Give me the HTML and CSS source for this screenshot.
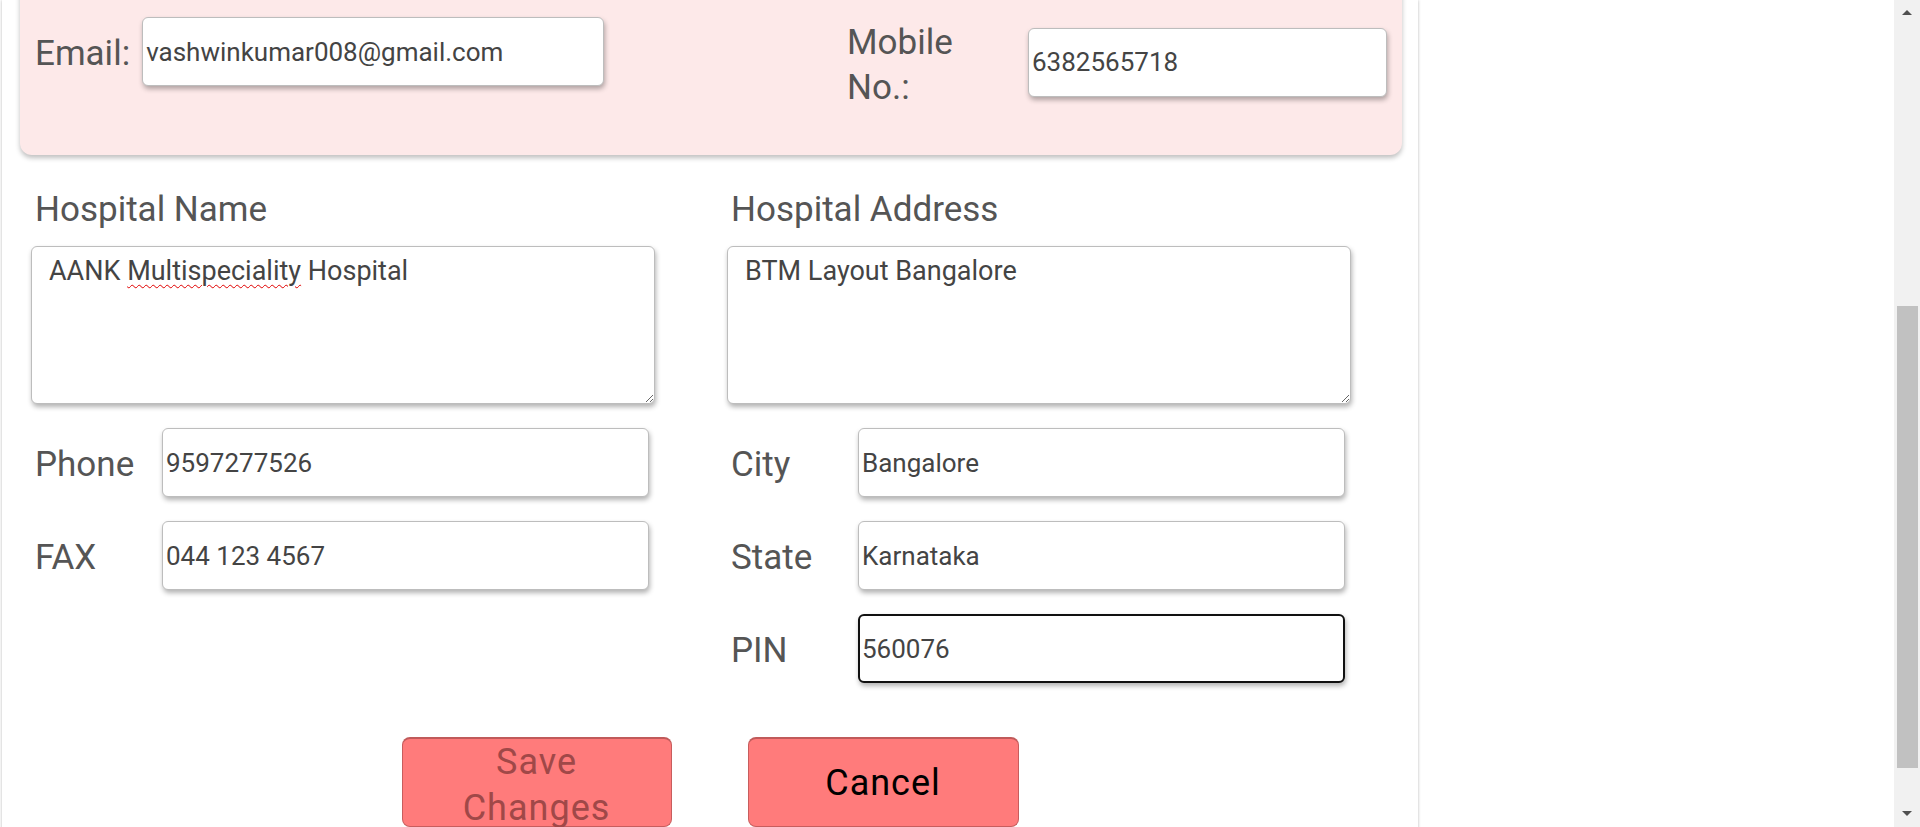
FILE: index.html
```html
<!DOCTYPE html>
<html lang="en">
<head>
<meta charset="utf-8">
<title>Edit Hospital Profile</title>
<link rel="stylesheet" href="styles.css">
</head>
<body>
<div class="viewport">
  <main class="sheet">
    <section class="contact-card">
      <div class="contact-group">
        <label class="card-label" for="email">Email:</label>
        <input class="field field-email" id="email" type="text" value="vashwinkumar008@gmail.com">
      </div>
      <div class="contact-group">
        <label class="card-label card-label-wrap" for="mobile">Mobile No.:</label>
        <input class="field field-mobile" id="mobile" type="text" value="6382565718">
      </div>
    </section>

    <form class="hospital-form">
      <div class="form-col">
        <label class="block-label" for="hname">Hospital Name</label>
        <div class="area-wrap">
          <textarea class="area" id="hname" spellcheck="false">AANK Multispeciality Hospital</textarea>
          <div class="area-mirror" aria-hidden="true">AANK <span class="misspelt">Multispeciality</span> Hospital</div>
        </div>
        <div class="field-rows">
          <div class="row">
            <label class="row-label" for="phone">Phone</label>
            <input class="field field-row" id="phone" type="text" value="9597277526">
          </div>
          <div class="row">
            <label class="row-label" for="fax">FAX</label>
            <input class="field field-row" id="fax" type="text" value="044 123 4567">
          </div>
        </div>
      </div>
      <div class="form-col">
        <label class="block-label" for="haddr">Hospital Address</label>
        <div class="area-wrap">
          <textarea class="area" id="haddr" spellcheck="false">BTM Layout Bangalore</textarea>
        </div>
        <div class="field-rows">
          <div class="row">
            <label class="row-label" for="city">City</label>
            <input class="field field-row" id="city" type="text" value="Bangalore">
          </div>
          <div class="row">
            <label class="row-label" for="state">State</label>
            <input class="field field-row" id="state" type="text" value="Karnataka">
          </div>
          <div class="row">
            <label class="row-label" for="pin">PIN</label>
            <input class="field field-row field-focus" id="pin" type="text" value="560076">
          </div>
        </div>
      </div>
    </form>

    <div class="actions">
      <button class="btn btn-save" type="button" disabled>Save Changes</button>
      <button class="btn btn-cancel" type="button">Cancel</button>
    </div>
  </main>

  <div class="scrollbar" aria-hidden="true">
    <div class="sb-arrow sb-up"></div>
    <div class="sb-track">
      <div class="sb-thumb"></div>
    </div>
    <div class="sb-arrow sb-down"></div>
  </div>
</div>
</body>
</html>
```

FILE: styles.css
```css
* {
  box-sizing: border-box;
}

html,
body {
  margin: 0;
  height: 100%;
  overflow: hidden;
  background: #ffffff;
}

body {
  font-family: Roboto, "Open Sans", "Liberation Sans", sans-serif;
  color: #555555;
}

.viewport {
  display: flex;
  height: 827px;
}

.sheet {
  flex: 0 0 1416px;
  margin-left: 2px;
  background: #ffffff;
  box-shadow: 0 0 3px rgba(0, 0, 0, 0.28);
  min-height: 900px;
}

/* ---------- contact card ---------- */
.contact-card {
  margin: -20px 16px 0 18px;
  padding: 37px 15px 48px 15px;
  background: #fde9e9;
  border-radius: 12px;
  box-shadow: 0 3px 5px rgba(0, 0, 0, 0.25);
  display: flex;
  justify-content: space-between;
  align-items: flex-start;
}

.contact-group {
  display: flex;
  align-items: center;
}

.card-label {
  font-size: 35px;
  line-height: 45px;
  color: #555555;
  padding-top: 4px;
}

.card-label-wrap {
  width: 165px;
  margin-right: 16px;
  padding-top: 3px;
  margin-bottom: -3px;
}

.field {
  height: 69px;
  border: 1px solid #bdbdbd;
  border-radius: 6px;
  background: #ffffff;
  box-shadow: 1px 3px 5px rgba(0, 0, 0, 0.3);
  padding: 0 3px;
  font-family: Roboto, "Open Sans", sans-serif;
  font-size: 26px;
  color: #444444;
  outline: none;
}

.field-email {
  width: 462px;
  margin-left: 12px;
}

.field-mobile {
  width: 359px;
}

/* ---------- form grid ---------- */
.hospital-form {
  display: grid;
  grid-template-columns: 624px 624px;
  column-gap: 72px;
  padding-left: 29px;
  margin-top: 34px;
}

.form-col {
  display: flex;
  flex-direction: column;
}

.block-label {
  font-size: 35px;
  line-height: 42px;
  padding-left: 4px;
  margin-bottom: 15px;
}

.area-wrap {
  position: relative;
  height: 158px;
}

.area,
.area-mirror {
  width: 624px;
  height: 158px;
  padding: 6px 17px;
  font-family: Roboto, "Open Sans", sans-serif;
  font-size: 27px;
  line-height: 36px;
  border: 1px solid #bdbdbd;
  border-radius: 6px;
}

.area {
  display: block;
  margin: 0;
  background: #ffffff;
  color: #444444;
  box-shadow: 1px 3px 5px rgba(0, 0, 0, 0.3);
  outline: none;
  resize: both;
}

.area-mirror {
  position: absolute;
  left: 0;
  top: 0;
  color: transparent;
  border-color: transparent;
  pointer-events: none;
}

.misspelt {
  text-decoration: underline wavy #e00000;
  text-decoration-thickness: 1px;
  text-underline-offset: 4px;
}

.field-rows {
  display: flex;
  flex-direction: column;
  gap: 24px;
  margin-top: 24px;
}

.row {
  display: flex;
  align-items: center;
}

.row-label {
  flex: 0 0 131px;
  padding-left: 4px;
  padding-top: 4px;
  font-size: 35px;
  line-height: 42px;
}

.field-row {
  width: 487px;
}

.field-focus {
  border: 2px solid #111111;
  padding: 0 2px;
}

/* ---------- actions ---------- */
.actions {
  display: flex;
  justify-content: center;
  gap: 76px;
  margin-top: 54px;
}

.btn {
  width: 270px;
  height: 90px;
  padding: 0 30px;
  background: #ff7b7b;
  border: 1px solid #c75d5d;
  border-top: 2px solid #c05a5a;
  border-radius: 8px;
  font-family: Roboto, "Open Sans", sans-serif;
  font-size: 36px;
  line-height: 46px;
  letter-spacing: 1px;
}

.btn-save {
  color: #a04848;
}

.btn-cancel {
  width: 271px;
  color: #000000;
}

/* ---------- scrollbar ---------- */
.scrollbar {
  margin-left: auto;
  width: 26px;
  background: #f1f1f1;
  display: flex;
  flex-direction: column;
  align-items: center;
}

.sb-arrow {
  width: 0;
  height: 0;
  border-left: 5px solid transparent;
  border-right: 5px solid transparent;
}

.sb-up {
  margin-top: 10px;
  border-bottom: 5px solid #505050;
}

.sb-down {
  margin-bottom: 11px;
  border-top: 5px solid #505050;
}

.sb-track {
  flex: 1;
  width: 100%;
  display: flex;
  flex-direction: column;
  align-items: center;
}

.sb-thumb {
  width: 21px;
  height: 462px;
  margin-top: 291px;
  margin-left: 1px;
  background: #c1c1c1;
}
```
